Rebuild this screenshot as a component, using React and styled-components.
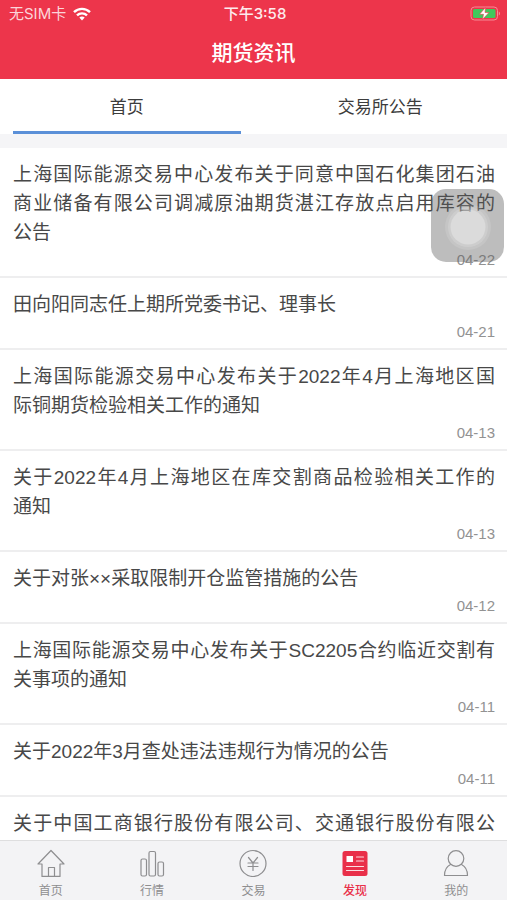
import React from "react";
import styled, { createGlobalStyle } from "styled-components";

const GlobalStyle = createGlobalStyle`
  * { box-sizing: border-box; }
  body {
    margin: 0;
    background: #fff;
    font-family: "Liberation Sans", "Noto Sans CJK SC", sans-serif;
  }
  button { font: inherit; border: 0; background: none; padding: 0; cursor: pointer; }
  a { color: inherit; text-decoration: none; }
`;

const Screen = styled.div`
  position: relative;
  display: flex;
  flex-direction: column;
  height: 100vh;
  overflow: hidden;
  color: #484848;
`;

const Header = styled.header`
  flex: none;
  background: #ed354b;
  color: #fff;
`;

const StatusBar = styled.div`
  display: grid;
  grid-template-columns: 1fr auto 1fr;
  align-items: center;
  height: 27px;
  padding: 0 6px 0 9px;
  font-family: Inter, "Noto Sans CJK SC", sans-serif;
  font-size: 15px;
  line-height: 20px;
`;

const Carrier = styled.div`
  display: flex;
  align-items: center;
  gap: 7px;
  color: #fbd5da;
`;

const Clock = styled.time`
  font-weight: 500;
  color: #fdebed;
`;

const BatterySlot = styled.div`
  display: flex;
  justify-content: flex-end;
`;

const Title = styled.h1`
  margin: 0;
  height: 52px;
  font-size: 21px;
  font-weight: 500;
  line-height: 52px;
  text-align: center;
`;

const Tabs = styled.div`
  flex: none;
  display: grid;
  grid-template-columns: 1fr 1fr;
  border-bottom: 14px solid #f5f5f7;
`;

const Tab = styled.button`
  height: 55px;
  margin: 0 13px;
  && {
    padding-top: 5px;
    border-bottom: 3px solid ${({ $active }) => ($active ? "#5b90d8" : "transparent")};
    font-size: 17px;
    line-height: 24px;
    color: #3c3c3c;
  }
`;

const List = styled.ul`
  flex: 1;
  min-height: 0;
  margin: 0;
  padding: 0;
  overflow: hidden;
  list-style: none;
`;

const Item = styled.li`
  border-bottom: 2px solid #eeeeef;
`;

const ItemLink = styled.a`
  display: block;
  padding: 12px 12px 6px 13px;
`;

const Line = styled.span`
  display: block;
  font-size: 19px;
  line-height: 29px;
  white-space: nowrap;
  text-align: justify;
  text-align-last: ${({ $full }) => ($full ? "justify" : "left")};
`;

const ItemDate = styled.time`
  display: block;
  margin-top: 3px;
  font-size: 15px;
  line-height: 20px;
  text-align: right;
  color: #929292;
`;

const BottomNav = styled.nav`
  flex: none;
  display: grid;
  grid-template-columns: repeat(5, 1fr);
  height: 60px;
  border-top: 1px solid #dededf;
  background: #f3f3f5;
`;

const NavLink = styled.a`
  display: flex;
  flex-direction: column;
  align-items: center;
  padding-top: 8px;
  gap: 5px;
  font-size: 12px;
  font-weight: ${({ $active }) => ($active ? 500 : 400)};
  line-height: 18px;
  color: ${({ $active }) => ($active ? "#e92f49" : "#8e8e90")};
`;

const FloatingButton = styled.button`
  position: absolute;
  top: 189px;
  right: 3px;
  display: grid;
  place-items: center;
  width: 73px;
  height: 73px;
  && {
    border-radius: 15px;
    background: rgba(90, 90, 90, 0.4);
  }
`;

const news = [
  { lines: ["上海国际能源交易中心发布关于同意中国石化集团石油", "商业储备有限公司调减原油期货湛江存放点启用库容的", "公告"], date: "04-22" },
  { lines: ["田向阳同志任上期所党委书记、理事长"], date: "04-21" },
  { lines: ["上海国际能源交易中心发布关于2022年4月上海地区国", "际铜期货检验相关工作的通知"], date: "04-13" },
  { lines: ["关于2022年4月上海地区在库交割商品检验相关工作的", "通知"], date: "04-13" },
  { lines: ["关于对张××采取限制开仓监管措施的公告"], date: "04-12" },
  { lines: ["上海国际能源交易中心发布关于SC2205合约临近交割有", "关事项的通知"], date: "04-11" },
  { lines: ["关于2022年3月查处违法违规行为情况的公告"], date: "04-11" },
  { lines: ["关于中国工商银行股份有限公司、交通银行股份有限公"], open: true },
];

const iconProps = {
  width: 28,
  height: 28,
  viewBox: "0 0 28 28",
  fill: "none",
  stroke: "currentColor",
  strokeWidth: 1.2,
  strokeLinejoin: "round",
  strokeLinecap: "round",
  "aria-hidden": true,
};

const HomeIcon = () => (
  <svg {...iconProps}>
    <path d="M5 15H1L14 1.500L27 15H23V27.400H17.500V18.500H11.500V27.400H5Z" />
    <path d="M11.500 27.400H17.500" />
  </svg>
);

const ChartIcon = () => (
  <svg {...iconProps}>
    <rect x="3" y="10" width="5.500" height="17" rx="1.500" />
    <rect x="11" y="2.500" width="6.500" height="24.500" rx="1.500" />
    <rect x="20" y="13" width="5.500" height="14" rx="1.500" />
  </svg>
);

const TradeIcon = () => (
  <svg {...iconProps}>
    <circle cx="14" cy="14.500" r="13" />
    <path d="M9.500 8.500L14 14L18.500 8.500M14 14V21.500M9 14H19M9 17.500H19" />
  </svg>
);

const DiscoverIcon = () => (
  <svg {...iconProps} stroke="none">
    <rect x="1.500" y="2" width="25" height="25" rx="2.500" fill="currentColor" />
    <rect x="5.500" y="7" width="6.500" height="6" fill="#fff" />
    <path d="M15.500 8H22.500M15.500 12H22.500M5.500 17.500H22.500M5.500 21.500H22.500" stroke="#fbdde1" strokeWidth="1.200" />
  </svg>
);

const UserIcon = () => (
  <svg {...iconProps}>
    <circle cx="14" cy="9.500" r="7.800" />
    <path d="M8.500 15.500C4.500 17.500 2.500 21.500 2.500 26.500H25.500C25.500 21.500 23.500 17.500 19.500 15.500" />
  </svg>
);

const WifiIcon = () => (
  <svg width="18" height="14" viewBox="0 0 18 14" fill="none" stroke="#fff" strokeWidth="2.400" aria-label="Wi-Fi">
    <path d="M1 5.200C5.500 0.800 12.500 0.800 17 5.200M4 8.400C6.800 5.700 11.200 5.700 14 8.400" />
    <path d="M9 13.500L6.300 10.600C7.800 9.200 10.200 9.200 11.700 10.600Z" fill="#fff" stroke="none" />
  </svg>
);

const BatteryIcon = () => (
  <svg width="31" height="15" viewBox="0 0 31 15" aria-label="电池">
    <rect x="1" y="1" width="26.500" height="13" rx="3.500" fill="none" stroke="#f58a96" />
    <rect x="3" y="3" width="22.500" height="9" rx="1.500" fill="#3fc85c" />
    <path d="M28.800 5.500C30.400 6 30.400 9 28.800 9.500Z" fill="#f58a96" />
    <path d="M15.500 1.500L9.500 8.300H13.500L12.500 13.500L19 6.500H15Z" fill="#fff" stroke="#ed354b" strokeWidth="0.600" />
  </svg>
);

const TouchIcon = () => (
  <svg width="50" height="50" viewBox="0 0 50 50" aria-hidden="true">
    <circle cx="25" cy="26" r="23" fill="#fff" opacity="0.120" />
    <circle cx="25" cy="26" r="20" fill="#fff" opacity="0.150" />
    <circle cx="25" cy="26" r="17.500" fill="#fff" opacity="0.280" />
  </svg>
);

const navItems = [
  { label: "首页", Icon: HomeIcon },
  { label: "行情", Icon: ChartIcon },
  { label: "交易", Icon: TradeIcon },
  { label: "发现", Icon: DiscoverIcon, active: true },
  { label: "我的", Icon: UserIcon },
];

export default function App() {
  return (
    <Screen>
      <GlobalStyle />
      <Header>
        <StatusBar>
          <Carrier>无SIM卡<WifiIcon /></Carrier>
          <Clock>下午3:58</Clock>
          <BatterySlot><BatteryIcon /></BatterySlot>
        </StatusBar>
        <Title>期货资讯</Title>
      </Header>
      <Tabs role="tablist">
        <Tab role="tab" aria-selected="true" $active>首页</Tab>
        <Tab role="tab" aria-selected="false">交易所公告</Tab>
      </Tabs>
      <List>
        {news.map(({ lines, date, open }) => (
          <Item key={lines[0]}>
            <ItemLink href="#">
              {lines.map((line, i) => (
                <Line key={line} $full={open || i < lines.length - 1}>{line}</Line>
              ))}
              {date && <ItemDate>{date}</ItemDate>}
            </ItemLink>
          </Item>
        ))}
      </List>
      <BottomNav>
        {navItems.map(({ label, Icon, active }) => (
          <NavLink key={label} href="#" $active={active} aria-current={active ? "page" : undefined}>
            <Icon />
            {label}
          </NavLink>
        ))}
      </BottomNav>
      <FloatingButton aria-label="辅助触控"><TouchIcon /></FloatingButton>
    </Screen>
  );
}
